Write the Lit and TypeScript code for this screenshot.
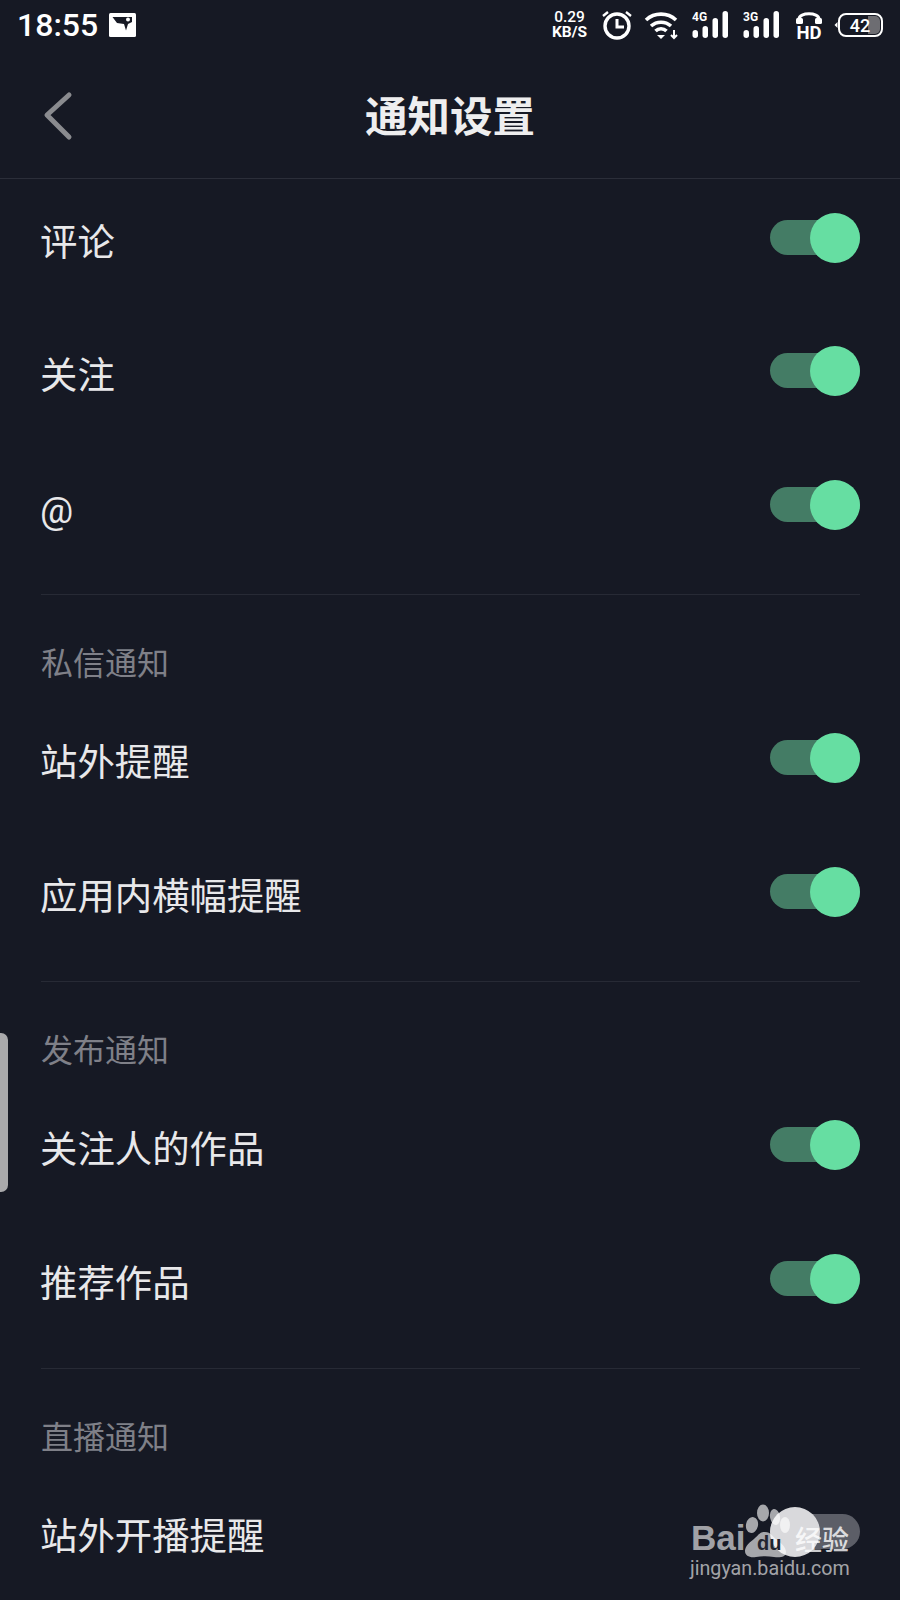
import { LitElement, css, html, svg } from "lit";
import { customElement, property } from "lit/decorators.js";

@customElement("app-switch")
export class AppSwitch extends LitElement {
  static styles = css`
    :host {
      display: block;
      position: relative;
      width: 90px;
      height: 50px;
    }
    .track {
      position: absolute;
      left: 0;
      right: 0;
      top: 7px;
      height: 35px;
      border-radius: 18px;
      background: #447c65;
    }
    .thumb {
      position: absolute;
      top: 0;
      right: 0;
      width: 50px;
      height: 50px;
      border-radius: 50%;
      background: #66dea2;
    }
    :host([off]) .track {
      background: #5c5e67;
    }
    :host([off]) .thumb {
      right: 40px;
      background: #d9d9dc;
    }
  `;

  @property({ type: Boolean, reflect: true }) off = false;

  render() {
    return html`<div class="track"></div><div class="thumb"></div>`;
  }
}

const signal = (label: string) => html`
  <svg width="37" height="28" viewBox="0 0 37 28" fill="#fff">
    <text x="0" y="9.5" font-size="12" font-weight="700" font-family="Roboto, sans-serif">${label}</text>
    <rect x="0.5" y="19" width="5.5" height="8" rx="2.75" />
    <rect x="10.5" y="15" width="5.5" height="12" rx="2.75" />
    <rect x="20.5" y="7" width="5.5" height="20" rx="2.75" />
    <rect x="30.5" y="0" width="5.5" height="27" rx="2.75" />
  </svg>
`;

const paw = svg`
  <ellipse cx="12" cy="23" rx="6" ry="8" transform="rotate(12 12 23)" />
  <ellipse cx="23" cy="11" rx="6" ry="8.5" />
  <ellipse cx="35" cy="15" rx="5" ry="8" transform="rotate(-10 35 15)" />
  <ellipse cx="45" cy="23" rx="5" ry="8" />
  <path d="M25 30c6 0 8 5 12 8s9 7 9 12-6 6-12 5-12-1-18 0-11-1-11-6 5-9 9-12 5-7 11-7z" />
`;

@customElement("app-root")
export class AppRoot extends LitElement {
  static styles = css`
    :host {
      display: block;
      position: relative;
      width: 900px;
      height: 1600px;
      overflow: hidden;
      background: #161924;
      color: #e8e8ea;
      font-family: "Noto Sans CJK SC", "Noto Sans", sans-serif;
    }

    .status {
      display: flex;
      align-items: center;
      height: 50px;
      padding: 0 17px;
      color: #fff;
    }
    .clock {
      font: 500 32px/50px Roboto, sans-serif;
      width: 92px;
    }
    .status-right {
      margin-left: auto;
      display: flex;
      align-items: center;
    }
    .speed {
      display: flex;
      flex-direction: column;
      align-items: center;
      width: 35px;
      margin-right: 14px;
      font: 500 15.5px/15.5px Roboto, sans-serif;
    }
    .speed span + span {
      font-weight: 700;
    }
    .alarm {
      margin-right: 11px;
    }
    .wifi {
      margin-right: 12px;
    }
    .sig {
      display: flex;
      margin-right: 14px;
    }
    .sig.three {
      margin-right: 15px;
    }
    .hd {
      margin-right: 11px;
      overflow: visible;
    }

    .nav {
      position: relative;
      display: flex;
      align-items: center;
      justify-content: center;
      height: 128px;
      border-bottom: 1px solid #2b2e39;
    }
    .title {
      font-size: 42.5px;
      font-weight: 700;
      line-height: 50px;
      color: #eeeeef;
    }
    .back {
      position: absolute;
      left: 43px;
      top: 41px;
    }

    .group {
      display: flex;
      flex-direction: column;
      gap: 15.33px;
      margin: 0 40px 0 41px;
      padding-bottom: 30px;
      border-bottom: 1px solid #272a35;
    }
    .group:last-child {
      border-bottom: 0;
    }
    .head {
      display: flex;
      align-items: center;
      height: 104.7px;
      margin-bottom: -15.33px;
      padding-top: 27px;
      box-sizing: border-box;
      font-size: 32px;
      color: #7f8088;
    }
    .row {
      display: flex;
      align-items: center;
      justify-content: space-between;
      height: 118px;
    }
    .label {
      font-size: 37.4px;
      line-height: 50px;
      margin: 4px 0 0 -1px;
    }
    .label.ascii {
      font-family: Roboto, sans-serif;
      font-size: 37px;
      margin-top: 12px;
    }

    .handle {
      position: absolute;
      left: 0;
      top: 1033px;
      width: 8px;
      height: 159px;
      border-radius: 0 7px 7px 0;
      background: #a9a9ab;
    }

    .mark {
      position: absolute;
      left: 690px;
      top: 1502px;
      width: 170px;
      height: 84px;
      color: rgba(255, 255, 255, 0.62);
    }
    .mark span {
      position: absolute;
      white-space: nowrap;
    }
    .mark svg {
      position: absolute;
      left: 50px;
      top: 0;
    }
    .bai {
      left: 1px;
      top: 16px;
      font: 700 35px/40px "Liberation Sans", sans-serif;
    }
    .mark .du {
      left: 67px;
      top: 29px;
      color: #22252f;
      font: 700 20px/24px "Liberation Sans", sans-serif;
    }
    .jing {
      left: 105px;
      top: 20px;
      font-size: 27px;
      line-height: 34px;
      font-weight: 500;
      color: rgba(255, 255, 255, 0.8);
    }
    .url {
      left: 0;
      top: 54px;
      font: 400 19.7px/26px Roboto, sans-serif;
    }
  `;

  private groups = [
    { rows: ["评论", "关注", "@"] },
    { head: "私信通知", rows: ["站外提醒", "应用内横幅提醒"] },
    { head: "发布通知", rows: ["关注人的作品", "推荐作品"] },
    { head: "直播通知", rows: ["站外开播提醒"], off: true },
  ];

  render() {
    return html`
      <div class="status">
        <span class="clock">18:55</span>
        <svg width="27" height="24" viewBox="0 0 27 24">
          <rect width="27" height="24" rx="1.5" fill="#fff" />
          <path d="M3.5 4H23v5l-4 2-2 6.5L15 11l-7-1z" fill="#161924" />
          <circle cx="19" cy="6.5" r="2" fill="#fff" />
        </svg>
        <div class="status-right">
          <div class="speed"><span>0.29</span><span>KB/S</span></div>
          <svg class="alarm" width="32" height="30" viewBox="0 0 32 30" fill="none" stroke="#fff">
            <circle cx="16" cy="16" r="12" stroke-width="3.4" />
            <path d="M16 9v8h7" stroke-width="3" />
            <path d="M2 6l5-4M30 6l-5-4" stroke-width="2.4" />
          </svg>
          <svg class="wifi" width="36" height="29" viewBox="0 0 36 29">
            <path d="M2 9a22 22 0 0 1 30 0M7 15a15 15 0 0 1 20 0M11.5 20a8 8 0 0 1 11 0" fill="none" stroke="#fff" stroke-width="3.6" />
            <path d="M13 24h8l-4 4z" fill="#fff" />
            <path d="M30 19v7M27 24l3 3 3-3" fill="none" stroke="#fff" stroke-width="2" />
          </svg>
          <span class="sig">${signal("4G")}</span>
          <span class="sig three">${signal("3G")}</span>
          <svg class="hd" width="28" height="29" viewBox="0 0 28 29">
            <path d="M4 10V8C4 1 24 1 24 8v2" fill="none" stroke="#fff" stroke-width="3" />
            <rect x="1" y="7" width="7" height="6" rx="1.5" fill="#fff" />
            <rect x="20" y="7" width="7" height="6" rx="1.5" fill="#fff" />
            <text x="14" y="27.5" text-anchor="middle" font-size="18.5" font-weight="700" font-family="Roboto, sans-serif" fill="#fff">HD</text>
          </svg>
          <svg width="49" height="24" viewBox="0 0 49 24">
            <path d="M0.5 12l3-3v6z" fill="#fff" />
            <rect x="5" y="1" width="43" height="22" rx="7" fill="none" stroke="#fff" stroke-width="2" />
            <path d="M34 3h7a5 5 0 0 1 5 5v8a5 5 0 0 1-5 5h-7z" fill="#6d6d72" />
            <text x="26" y="18.5" text-anchor="middle" font-size="18" font-weight="500" font-family="Roboto, sans-serif" fill="#fff">42</text>
          </svg>
        </div>
      </div>

      <div class="nav">
        <svg class="back" width="30" height="50" viewBox="0 0 30 50" fill="none">
          <path d="M26 4L4 24l22 22" stroke="#8a8b8f" stroke-width="5" stroke-linecap="round" stroke-linejoin="round" />
        </svg>
        <div class="title">通知设置</div>
      </div>

      ${this.groups.map(
        (g) => html`
          <div class="group">
            ${g.head ? html`<div class="head">${g.head}</div>` : null}
            ${g.rows.map(
              (r) => html`
                <div class="row">
                  <span class="label ${r === "@" ? "ascii" : ""}">${r}</span>
                  <app-switch ?off=${g.off}></app-switch>
                </div>
              `
            )}
          </div>
        `
      )}

      <div class="handle"></div>

      <div class="mark">
        <span class="bai">Bai</span>
        <svg width="56" height="56" viewBox="0 0 56 56" fill="rgba(255,255,255,0.62)">${paw}</svg>
        <span class="du">du</span>
        <span class="jing">经验</span>
        <span class="url">jingyan.baidu.com</span>
      </div>
    `;
  }
}
